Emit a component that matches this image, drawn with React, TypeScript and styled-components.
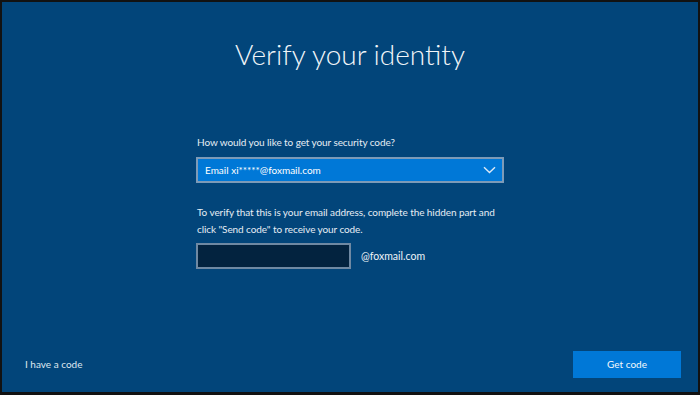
import React from "react";
import styled, { createGlobalStyle } from "styled-components";

const GlobalStyle = createGlobalStyle`
  html, body {
    margin: 0;
    padding: 0;
    background: #111;
  }
  * {
    box-sizing: border-box;
  }
`;

const Screen = styled.div`
  width: 700px;
  height: 395px;
  border: 2px solid #121212;
  border-bottom-width: 3px;
  background: #02457a;
  color: #ffffff;
  font-family: Lato, "Open Sans", sans-serif;
  display: flex;
  flex-direction: column;
`;

const Main = styled.div`
  flex: 1;
  display: flex;
  flex-direction: column;
  align-items: center;
`;

const Title = styled.h1`
  margin: 32px 0 0;
  font-size: 28px;
  font-weight: 300;
  line-height: 40px;
  color: #f1f5f9;
`;

const Form = styled.div`
  width: 308px;
  margin-top: 60px;
  display: flex;
  flex-direction: column;
`;

const Label = styled.p`
  margin: 0 0 0 1px;
  font-size: 10px;
  line-height: 17px;
  letter-spacing: -0.08px;
  color: #e6edf4;
  white-space: nowrap;
`;

const Select = styled.div`
  margin-top: 6px;
  height: 26px;
  background: #0078d7;
  border: 2px solid #7d9bb8;
  display: flex;
  align-items: center;
  justify-content: space-between;
  padding: 0 6px 0 7px;
  font-size: 10px;
  color: #ffffff;
`;

const Hint = styled(Label)`
  margin-top: 21px;
`;

const InputRow = styled.div`
  margin-top: 5px;
  display: flex;
  align-items: center;
  gap: 10px;
`;

const CodeInput = styled.div<{ $width: number }>`
  width: ${(p) => p.$width}px;
  height: 26px;
  background: #03233f;
  border: 2px solid #6f89a3;
`;

const Domain = styled.span`
  font-size: 10.5px;
  color: #eef3f8;
`;

const Footer = styled.div`
  height: 56px;
  display: flex;
  align-items: center;
  justify-content: space-between;
  padding: 0 17px 0 23px;
`;

const Link = styled.span`
  font-size: 10px;
  color: #dfe8f1;
`;

const Button = styled.div`
  width: 108px;
  height: 27px;
  background: #0078d7;
  display: flex;
  align-items: center;
  justify-content: center;
  font-size: 10px;
  color: #f4f8fc;
`;

const Chevron = () => (
  <svg width="13" height="8" viewBox="0 0 13 8" fill="none">
    <path d="M1 1.2 L6.5 6.5 L12 1.2" stroke="#dbe9f7" strokeWidth="1.4" />
  </svg>
);

export default function App() {
  return (
    <>
      <GlobalStyle />
      <Screen>
        <Main>
          <Title>Verify your identity</Title>
          <Form>
            <Label>How would you like to get your security code?</Label>
            <Select>
              <span>Email xi*****@foxmail.com</span>
              <Chevron />
            </Select>
            <Hint>
              To verify that this is your email address, complete the hidden part and
              <br />
              click "Send code" to receive your code.
            </Hint>
            <InputRow>
              <CodeInput $width={155} />
              <Domain>@foxmail.com</Domain>
            </InputRow>
          </Form>
        </Main>
        <Footer>
          <Link>I have a code</Link>
          <Button>Get code</Button>
        </Footer>
      </Screen>
    </>
  );
}
